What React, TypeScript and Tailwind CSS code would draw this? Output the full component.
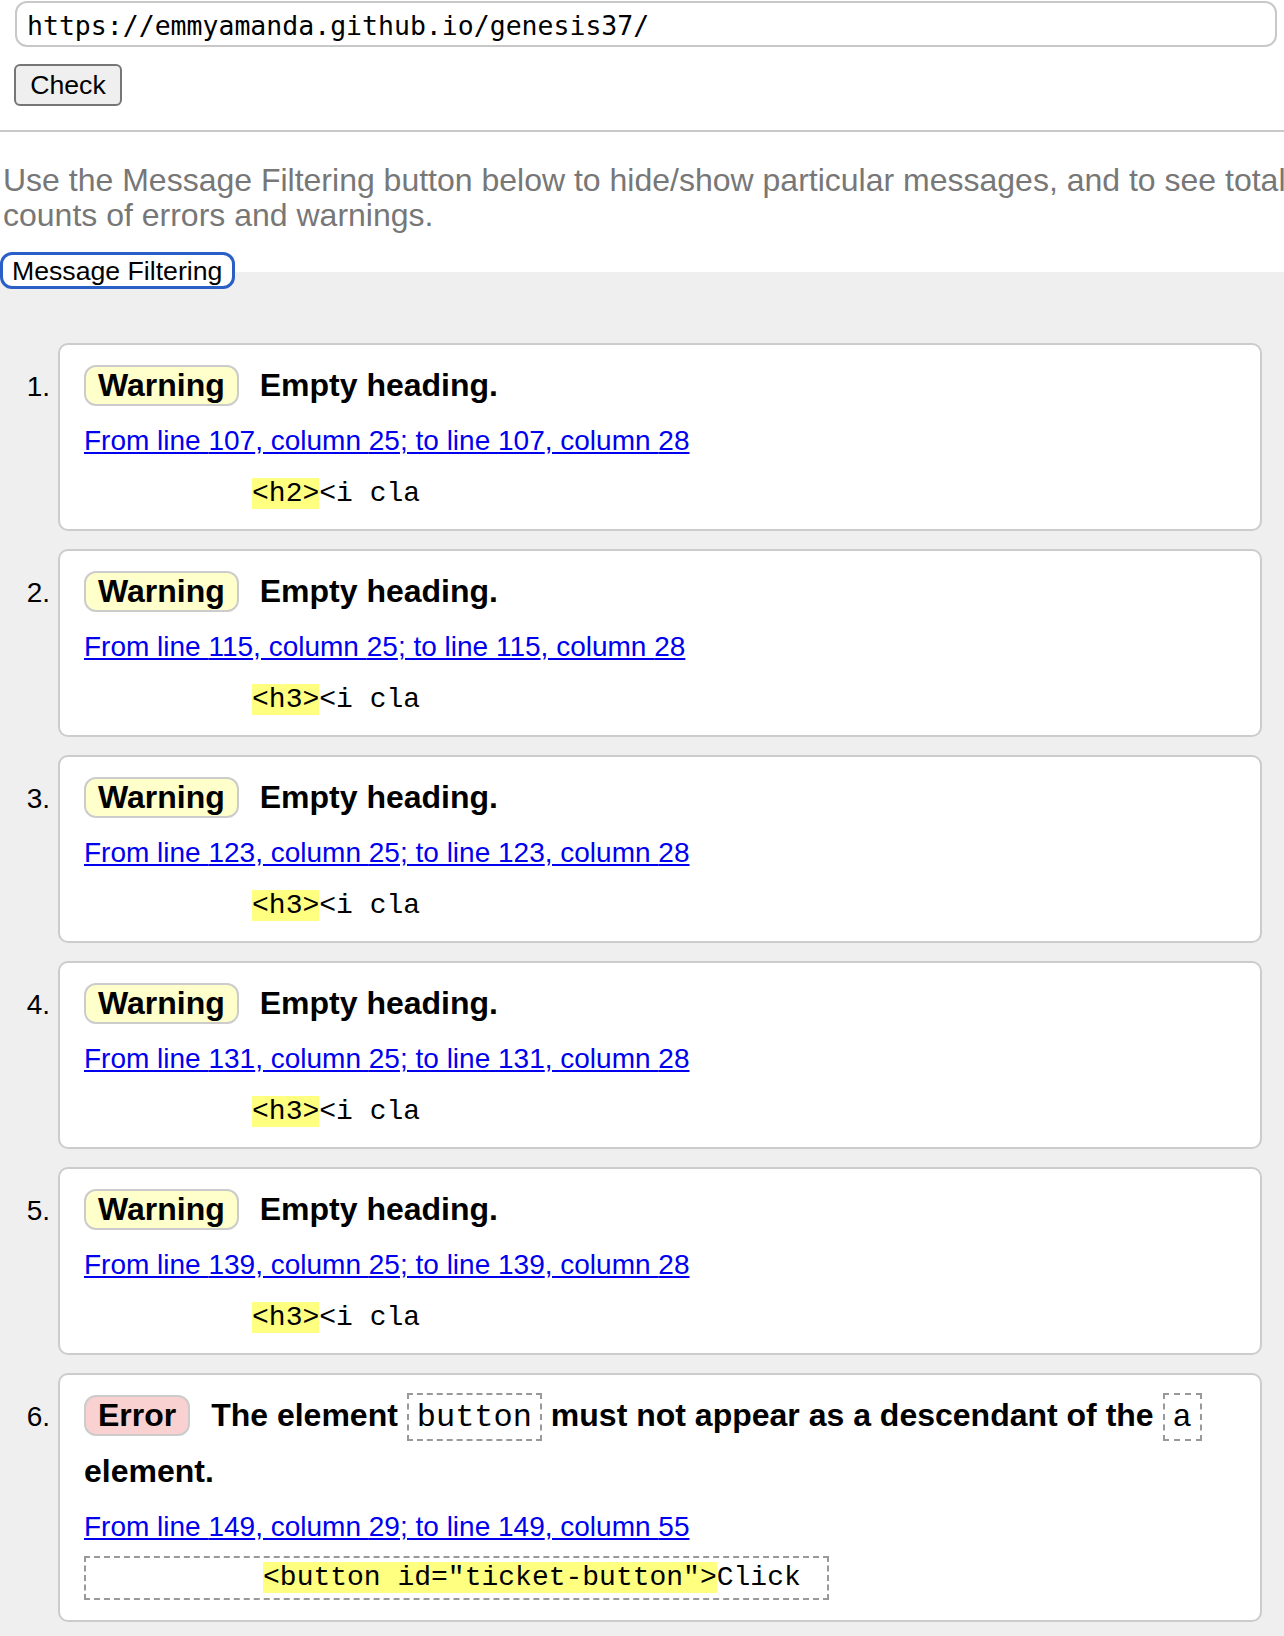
import React from "react";

type Msg = { n: number; line: number; tag: string };

const warnings: Msg[] = [
  { n: 1, line: 107, tag: "h2" },
  { n: 2, line: 115, tag: "h3" },
  { n: 3, line: 123, tag: "h3" },
  { n: 4, line: 131, tag: "h3" },
  { n: 5, line: 139, tag: "h3" },
];

const mono = "font-['Liberation_Mono','Courier_New',monospace]";

function Badge({ kind }: { kind: "warning" | "error" }) {
  return (
    <span
      className={`mr-[12px] inline-block rounded-[12px] border-2 border-[#cccccc] px-[12px] leading-[37px] ${
        kind === "warning" ? "bg-[#ffffcc]" : "bg-[#f9d1d1]"
      }`}
    >
      {kind === "warning" ? "Warning" : "Error"}
    </span>
  );
}

function Card({
  n,
  children,
}: {
  n: number;
  children: React.ReactNode;
}) {
  return (
    <li className="flex items-baseline">
      <span className="w-[58px] shrink-0 pr-[8px] text-right text-[28px]">
        {n}.
      </span>
      <div className="flex-1 rounded-[10px] border-2 border-[#cccccc] bg-white pb-[16px] pl-[24px] pr-[24px] pt-[12px]">
        {children}
      </div>
    </li>
  );
}

function Location({ from, fromCol, to, toCol }: { from: number; fromCol: number; to: number; toCol: number }) {
  return (
    <a
      href="#"
      className="mt-[12px] block w-fit text-[28px] leading-[32px] text-[#0000ee] underline"
    >
      From line {from}, column {fromCol}; to line {to}, column {toCol}
    </a>
  );
}

export default function App() {
  return (
    <div className="min-h-screen overflow-hidden bg-white font-['Liberation_Sans',Arial,sans-serif] text-black">
      {/* url field + check */}
      <div className="ml-[15px] mr-[7px] mt-[1px] h-[46px] whitespace-nowrap rounded-[12px] border-2 border-[#c8c8c8] pl-[10px] pt-[8px] font-['DejaVu_Sans_Mono',monospace] text-[26.5px] leading-[30px]">
        https://emmyamanda.github.io/genesis37/
      </div>
      <button className="ml-[14px] mt-[17px] block h-[42px] w-[108px] rounded-[6px] border-2 border-[#767676] bg-[#efefef] text-[26.67px] leading-[36px]">
        Check
      </button>

      <div className="mt-[24px] h-[2px] bg-[#c8c8c8]" />

      <p className="mt-[31px] whitespace-nowrap pl-[3px] text-[32px] leading-[35px] text-[#777777]">
        Use the Message Filtering button below to hide/show particular messages, and to see total
        <br />
        counts of errors and warnings.
      </p>

      <div className="relative z-10 mt-[19px] -mb-[17px]">
        <button className="block h-[37px] rounded-[12px] border-[3px] border-[#2a5fc8] bg-white pl-[9px] pr-[10px] text-[26.67px] leading-[30px]">
          Message Filtering
        </button>
      </div>

      <section className="bg-[#efefef] pb-[40px] pr-[22px] pt-[71px]">
        <ol className="flex flex-col gap-[18px]">
          {warnings.map((w) => (
            <Card key={w.n} n={w.n}>
              <p className="text-[32px] font-bold leading-[56px]">
                <Badge kind="warning" /> Empty heading.
              </p>
              <Location from={w.line} fromCol={25} to={w.line} toCol={28} />
              <div className={`mt-[18px] whitespace-pre text-[28px] leading-[38px] ${mono}`}>
                {"          "}
                <span className="bg-[#ffff80]">{`<${w.tag}>`}</span>
                {"<i cla"}
              </div>
            </Card>
          ))}

          <Card n={6}>
            <p className="text-[32px] font-bold leading-[56px]">
              <Badge kind="error" /> The element{" "}
              <code
                className={`inline-block border-2 border-dashed border-[#999999] px-[8px] pb-[3px] pt-[5px] text-[32px] font-normal leading-[36px] ${mono}`}
              >
                button
              </code>{" "}
              must not appear as a descendant of the{" "}
              <code
                className={`inline-block border-2 border-dashed border-[#999999] px-[8px] pb-[3px] pt-[5px] text-[32px] font-normal leading-[36px] ${mono}`}
              >
                a
              </code>{" "}
              element.
            </p>
            <Location from={149} fromCol={29} to={149} toCol={55} />
            <div className="mt-[13px] pb-[4px]">
              <code
                className={`block w-fit whitespace-pre border-2 border-dashed border-[#999999] px-[9px] text-[28px] leading-[40px] ${mono}`}
              >
                {"          "}
                <span className="bg-[#ffff80]">{'<button id="ticket-button">'}</span>
                {"Click "}
              </code>
            </div>
          </Card>
        </ol>
      </section>
    </div>
  );
}
